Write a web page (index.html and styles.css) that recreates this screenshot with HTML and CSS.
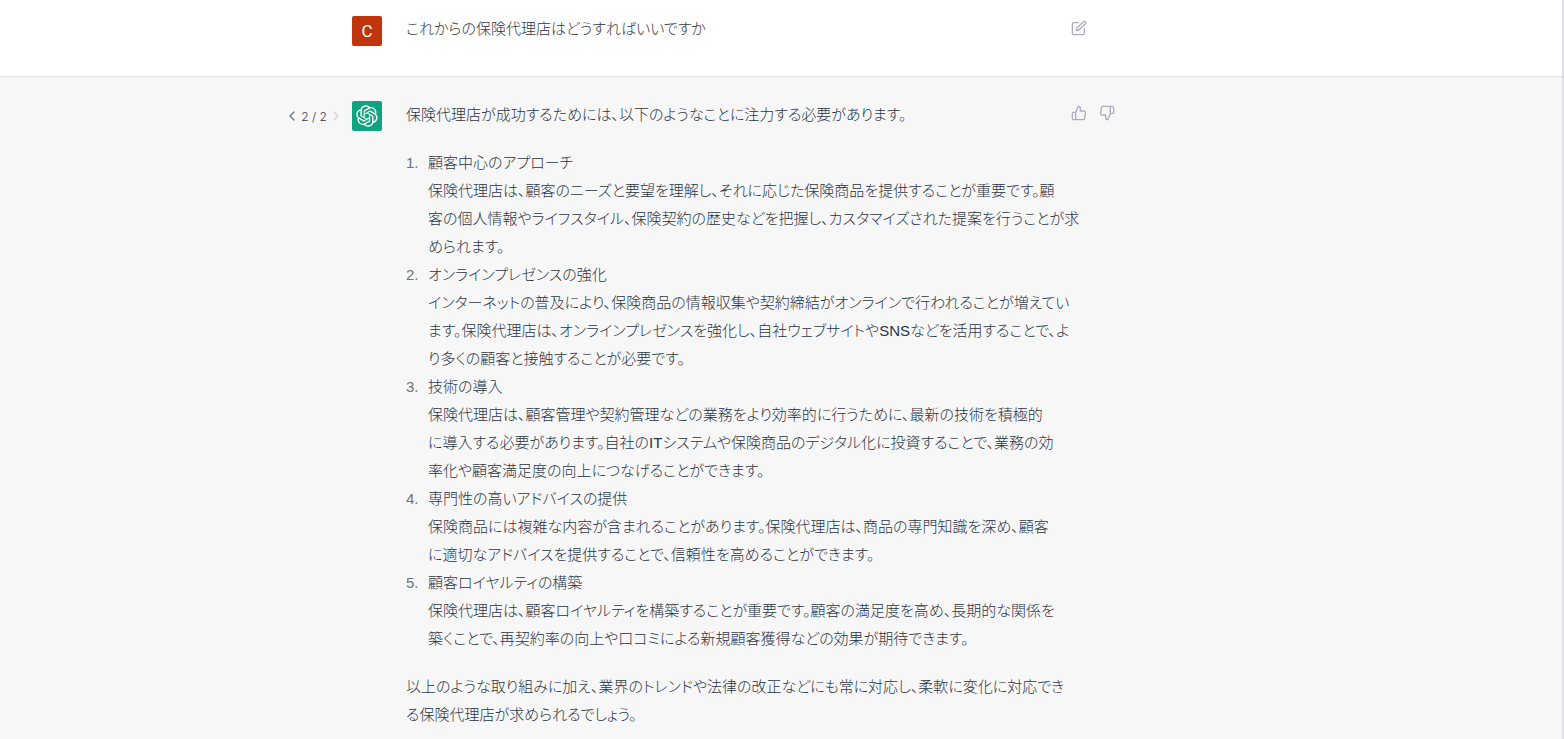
FILE: index.html
```
<!DOCTYPE html>
<html lang="ja">
<head>
<meta charset="utf-8">
<meta name="viewport" content="width=device-width, initial-scale=1">
<title>Chat</title>
<link rel="stylesheet" href="styles.css">
</head>
<body>
<main class="thread">
  <article class="turn turn-user">
    <div class="turn-inner">
      <div class="avatar avatar-user">C</div>
      <div class="message question">これからの保険代理店はどうすればいいですか</div>
      <div class="actions">
        <button class="icon-button" type="button" aria-label="編集">
          <svg class="icon" viewBox="0 0 24 24"><path d="M11 4H4a2 2 0 0 0-2 2v14a2 2 0 0 0 2 2h14a2 2 0 0 0 2-2v-7"/><path d="M18.5 2.5a2.121 2.121 0 0 1 3 3L12 15l-4 1 1-4 9.5-9.5z"/></svg>
        </button>
      </div>
    </div>
  </article>
  <article class="turn turn-assistant">
    <div class="turn-inner">
      <nav class="pager" aria-label="回答の切り替え">
        <button class="pager-button" type="button" aria-label="前へ"><svg class="chevron" viewBox="6 3 12 18"><path d="M15 18l-6-6 6-6"/></svg></button>
        <span class="pager-count">2 / 2</span>
        <button class="pager-button" type="button" aria-label="次へ" disabled><svg class="chevron" viewBox="6 3 12 18"><path d="M9 18l6-6-6-6"/></svg></button>
      </nav>
      <div class="avatar avatar-assistant">
        <svg class="logo" viewBox="0 0 41 41"><path d="M37.532 16.87a9.963 9.963 0 0 0-.856-8.184 10.078 10.078 0 0 0-10.855-4.835A9.964 9.964 0 0 0 18.306.5a10.079 10.079 0 0 0-9.614 6.977 9.967 9.967 0 0 0-6.664 4.834 10.08 10.08 0 0 0 1.24 11.817 9.965 9.965 0 0 0 .856 8.185 10.079 10.079 0 0 0 10.855 4.835 9.965 9.965 0 0 0 7.516 3.35 10.078 10.078 0 0 0 9.617-6.981 9.967 9.967 0 0 0 6.663-4.834 10.079 10.079 0 0 0-1.243-11.813zM22.498 37.886a7.474 7.474 0 0 1-4.799-1.735c.061-.033.168-.091.237-.134l7.964-4.6a1.294 1.294 0 0 0 .655-1.134V19.054l3.366 1.944a.12.12 0 0 1 .066.092v9.299a7.505 7.505 0 0 1-7.49 7.496zM6.392 31.006a7.471 7.471 0 0 1-.894-5.023c.06.036.162.099.237.141l7.964 4.6a1.297 1.297 0 0 0 1.308 0l9.724-5.614v3.888a.12.12 0 0 1-.048.103l-8.051 4.649a7.504 7.504 0 0 1-10.24-2.744zM4.297 13.62A7.469 7.469 0 0 1 8.2 10.333c0 .068-.004.19-.004.274v9.201a1.294 1.294 0 0 0 .654 1.132l9.723 5.614-3.366 1.944a.12.12 0 0 1-.114.01L7.04 23.856a7.504 7.504 0 0 1-2.743-10.237zm27.658 6.437l-9.724-5.615 3.367-1.943a.121.121 0 0 1 .113-.01l8.052 4.648a7.498 7.498 0 0 1-1.158 13.528v-9.476a1.293 1.293 0 0 0-.65-1.132zm3.35-5.043c-.059-.037-.162-.099-.236-.141l-7.965-4.6a1.298 1.298 0 0 0-1.308 0l-9.723 5.614v-3.888a.12.12 0 0 1 .048-.103l8.05-4.645a7.497 7.497 0 0 1 11.135 7.763zm-21.063 6.929l-3.367-1.944a.12.12 0 0 1-.065-.092v-9.299a7.497 7.497 0 0 1 12.293-5.756 6.94 6.94 0 0 0-.236.134l-7.965 4.6a1.294 1.294 0 0 0-.654 1.132l-.006 11.225zm1.829-3.943l4.33-2.501 4.332 2.5v5l-4.331 2.5-4.331-2.5V18z"/></svg>
      </div>
      <div class="message answer">
        <p>保険代理店が成功するためには、以下のようなことに注力する必要があります。</p>
        <ol class="points">
          <li>顧客中心のアプローチ<br>保険代理店は、顧客のニーズと要望を理解し、それに応じた保険商品を提供することが重要です。顧<br>客の個人情報やライフスタイル、保険契約の歴史などを把握し、カスタマイズされた提案を行うことが求<br>められます。</li>
          <li>オンラインプレゼンスの強化<br>インターネットの普及により、保険商品の情報収集や契約締結がオンラインで行われることが増えてい<br>ます。保険代理店は、オンラインプレゼンスを強化し、自社ウェブサイトやSNSなどを活用することで、よ<br>り多くの顧客と接触することが必要です。</li>
          <li>技術の導入<br>保険代理店は、顧客管理や契約管理などの業務をより効率的に行うために、最新の技術を積極的<br>に導入する必要があります。自社のITシステムや保険商品のデジタル化に投資することで、業務の効<br>率化や顧客満足度の向上につなげることができます。</li>
          <li>専門性の高いアドバイスの提供<br>保険商品には複雑な内容が含まれることがあります。保険代理店は、商品の専門知識を深め、顧客<br>に適切なアドバイスを提供することで、信頼性を高めることができます。</li>
          <li>顧客ロイヤルティの構築<br>保険代理店は、顧客ロイヤルティを構築することが重要です。顧客の満足度を高め、長期的な関係を<br>築くことで、再契約率の向上や口コミによる新規顧客獲得などの効果が期待できます。</li>
        </ol>
        <p>以上のような取り組みに加え、業界のトレンドや法律の改正などにも常に対応し、柔軟に変化に対応でき<br>る保険代理店が求められるでしょう。</p>
      </div>
      <div class="actions">
        <button class="icon-button" type="button" aria-label="良い回答">
          <svg class="icon" viewBox="0 0 24 24"><path d="M14 9V5a3 3 0 0 0-3-3l-4 9v11h11.28a2 2 0 0 0 2-1.7l1.38-9a2 2 0 0 0-2-2.3zM7 22H4a2 2 0 0 1-2-2v-7a2 2 0 0 1 2-2h3"/></svg>
        </button>
        <button class="icon-button" type="button" aria-label="悪い回答">
          <svg class="icon" viewBox="0 0 24 24"><path d="M10 15v4a3 3 0 0 0 3 3l4-9V2H5.72a2 2 0 0 0-2 1.7l-1.38 9a2 2 0 0 0 2 2.3zm7-13h2.67A2.31 2.31 0 0 1 22 4v7a2.31 2.31 0 0 1-2.33 2H17"/></svg>
        </button>
      </div>
    </div>
  </article>
</main>
</body>
</html>
```
FILE: styles.css
```
* {
  box-sizing: border-box;
}

body {
  margin: 0;
  min-height: 100vh;
  display: flex;
  border-right: 2px solid #dedee6;
  background: #f7f7f8;
  font-family: "Liberation Sans", "Noto Sans CJK JP", sans-serif;
  font-size: 15px;
  font-weight: 300;
  font-feature-settings: "palt";
}

.thread {
  flex: 1;
  min-width: 0;
}

.turn-user {
  padding: 16px 0 30px;
  border-bottom: 1px solid #e3e3e5;
  background: #fff;
  color: #343541;
}

.turn-assistant {
  padding: 24px 0 8px;
  color: #2b3544;
}

.turn-inner {
  display: grid;
  grid-template-columns: 52px 30px minmax(0, 656px) 1fr;
  column-gap: 12px;
  max-width: 986px;
  margin: 0 auto;
}

.avatar {
  grid-column: 2;
  display: flex;
  align-items: center;
  justify-content: center;
  width: 30px;
  height: 30px;
  border-radius: 2px;
  color: #fff;
}

.avatar-user {
  background: #bf360c;
  font-family: Roboto, sans-serif;
  font-size: 17px;
  font-weight: 400;
}

.avatar-assistant {
  background: #10a37f;
}

.logo {
  width: 22px;
  height: 22px;
  fill: currentColor;
}

.message {
  margin-left: 12px;
  white-space: nowrap;
}

.question {
  line-height: 26px;
}

.answer {
  line-height: 28px;
}

.answer p {
  margin: 0;
}

.points {
  margin: 20px 0;
  padding-left: 22px;
  list-style: none;
  counter-reset: point;
}

.points li {
  counter-increment: point;
}

.points li::before {
  content: counter(point) ".";
  display: inline-block;
  width: 22px;
  margin-left: -22px;
  color: #6b7280;
}

.actions {
  display: flex;
  align-items: flex-start;
  gap: 12px;
  padding: 4px 0 0 9px;
}

.icon-button,
.pager-button {
  display: flex;
  padding: 0;
  border: 0;
  background: none;
  color: #acacbe;
  cursor: pointer;
}

.icon,
.chevron {
  width: 16px;
  height: 16px;
  fill: none;
  stroke: currentColor;
  stroke-width: 2;
  stroke-linecap: round;
  stroke-linejoin: round;
}

.pager {
  grid-column: 1;
  display: flex;
  align-items: center;
  justify-content: space-between;
  height: 30px;
  color: #343541;
  font-family: Inter, sans-serif;
  font-size: 12px;
  font-weight: 300;
}

.pager-button {
  color: #6b7280;
}

.pager-button:disabled {
  color: #d1d5db;
}

.chevron {
  width: 8px;
  height: 12px;
}
```
